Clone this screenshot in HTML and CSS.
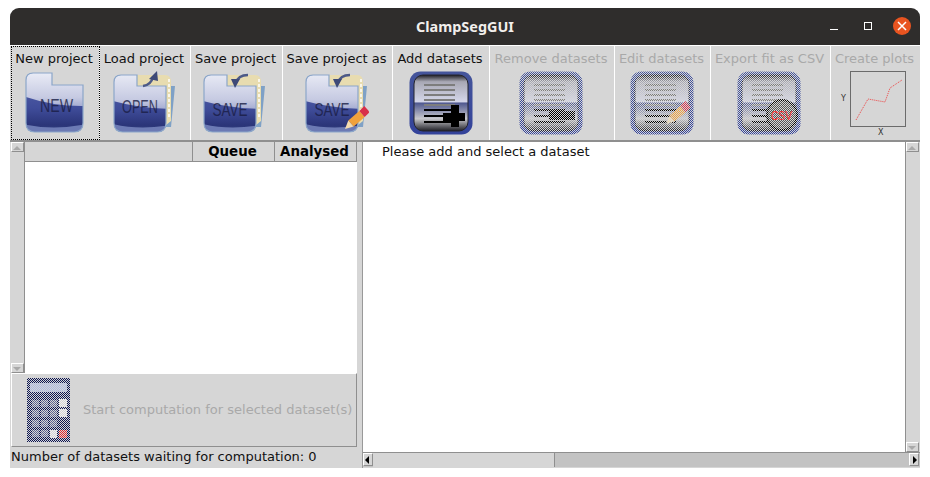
FILE: index.html
```html
<!DOCTYPE html>
<html lang="en">
<head>
    <meta charset="UTF-8">
    <meta name="viewport" content="width=device-width, initial-scale=1.0">
    <title>ClampSegGUI</title>
    <link rel="stylesheet" href="styles.css">
</head>
<body>

<div class="window">

    <!-- Title bar -->
    <div class="titlebar">
        <span class="title">ClampSegGUI</span>
        <div class="win-controls">
            <span class="win-min"></span>
            <span class="win-max"></span>
            <span class="win-close">
                <svg width="10" height="10" viewBox="0 0 10 10"><path d="M1 1L9 9M9 1L1 9" stroke="#fff" stroke-width="1.5"/></svg>
            </span>
        </div>
    </div>

    <!-- Toolbar -->
    <div class="toolbar">
        <button class="tool tool-new focused">
            <span class="tool-label">New project</span>
            <svg class="icon" width="64" height="64" viewBox="0 0 64 64">
                <defs>
                    <linearGradient id="folderDark" x1="0" y1="0" x2="0" y2="1">
                        <stop offset="0" stop-color="#5a68ae"/>
                        <stop offset="0.6" stop-color="#3f4c99"/>
                        <stop offset="0.88" stop-color="#2b3579"/>
                        <stop offset="1" stop-color="#33407f"/>
                    </linearGradient>
                    <linearGradient id="folderLight" x1="0" y1="0" x2="0" y2="1">
                        <stop offset="0" stop-color="#eceef7"/>
                        <stop offset="0.75" stop-color="#c6cae2"/>
                        <stop offset="1" stop-color="#a6add2"/>
                    </linearGradient>
                    <linearGradient id="squareFill" x1="0" y1="0" x2="0" y2="1">
                        <stop offset="0" stop-color="#45559b"/>
                        <stop offset="1" stop-color="#33429a"/>
                    </linearGradient>
                    <linearGradient id="squareInner" x1="0" y1="0" x2="0" y2="1">
                        <stop offset="0" stop-color="#1f1f26"/>
                        <stop offset="0.12" stop-color="#a8a8b4"/>
                        <stop offset="0.48" stop-color="#d5d7ea"/>
                        <stop offset="0.5" stop-color="#4f588f"/>
                        <stop offset="0.78" stop-color="#c8c8cc"/>
                        <stop offset="1" stop-color="#1f1f26"/>
                    </linearGradient>
                    <pattern id="dither" width="2" height="2" patternUnits="userSpaceOnUse">
                        <rect x="0" y="0" width="1" height="1" fill="#d6d6d6"/>
                        <rect x="1" y="1" width="1" height="1" fill="#d6d6d6"/>
                    </pattern>
                    <path id="folderShape" d="M10 2H29V14H60V52Q60 61 51 61H12Q3 61 3 52V9Q3 2 10 2Z"/>
                    <path id="folderLowShape" d="M8 4H24V15H53V52Q53 61 44 61H10Q1 61 1 52V11Q1 4 8 4Z"/>
                    <clipPath id="folderClip"><use href="#folderShape"/></clipPath>
                    <clipPath id="folderLowClip"><use href="#folderLowShape"/></clipPath>
                    <g id="folderNew">
                        <use href="#folderShape" fill="url(#folderDark)"/>
                        <g clip-path="url(#folderClip)">
                            <path d="M0 0H64V35Q30 36 0 25Z" fill="url(#folderLight)"/>
                            <path d="M0 53Q30 60 64 53V64H0Z" fill="#6c7ab4"/>
                        </g>
                        <use href="#folderShape" fill="none" stroke="#8ba6c9" stroke-width="1.2"/>
                    </g>
                    <g id="folderLow">
                        <path d="M50 15H62L58 56H50Z" fill="#7fa1c6"/>
                        <path d="M24 4H52Q58 4 58 11V50L53 54V15H24Z" fill="#e8dcb0"/>
                        <path d="M56 8V46" stroke="#fff" stroke-width="1.5" stroke-dasharray="3 2"/>
                        <use href="#folderLowShape" fill="url(#folderDark)"/>
                        <g clip-path="url(#folderLowClip)">
                            <path d="M0 0H64V38Q28 38 0 30Z" fill="url(#folderLight)"/>
                            <path d="M0 53Q28 60 64 53V64H0Z" fill="#6c7ab4"/>
                        </g>
                        <use href="#folderLowShape" fill="none" stroke="#8ba6c9" stroke-width="1.2"/>
                    </g>
                    <g id="saveArrow">
                        <path d="M33 12Q35 4 45 4" fill="none" stroke="#4d5a88" stroke-width="2.5"/>
                        <path d="M28 8L37 8L32 17Z" fill="#3e4a78"/>
                    </g>
                    <g id="docLines" fill="#7d7d7d">
                        <rect x="15" y="13" width="31" height="2"/>
                        <rect x="15" y="18" width="31" height="2"/>
                        <rect x="15" y="23" width="31" height="2"/>
                        <rect x="15" y="28" width="31" height="2"/>
                        <rect x="15" y="33" width="31" height="2"/>
                    </g>
                    <g id="docDark" fill="#000">
                        <rect x="15" y="38" width="31" height="2"/>
                        <rect x="15" y="44" width="31" height="2"/>
                        <rect x="15" y="50" width="31" height="2"/>
                    </g>
                    <g id="square">
                        <rect x="0.5" y="0.5" width="63" height="63" rx="11" fill="url(#squareFill)"/>
                        <rect x="5" y="4" width="54" height="56" rx="9" fill="url(#squareInner)" stroke="#24242c" stroke-width="1"/>
                    </g>
                    <g id="pencil">
                        <path d="M43.3 49.5L54.3 40L59.7 46L48.7 55.5Z" fill="#f0a13c"/>
                        <path d="M54.3 40L59.3 35L64.7 41L59.7 46Z" fill="#d8304a"/>
                        <path d="M43.3 49.5L40 58L48.7 55.5Z" fill="#f5dcb0"/>
                    </g>
                </defs>
                <use href="#folderNew"/>
                <text class="folder-text" x="33.5" y="41" textLength="33" lengthAdjust="spacingAndGlyphs">NEW</text>
            </svg>
        </button>

        <button class="tool tool-load">
            <span class="tool-label">Load project</span>
            <svg class="icon" width="64" height="64" viewBox="0 0 64 64">
                <use href="#folderLow"/>
                <path d="M30 15Q38 14 40 6" fill="none" stroke="#4d5a88" stroke-width="2.5"/>
                <path d="M36 8L44 0L45 10Z" fill="#3e4a78"/>
                <text class="folder-text" x="27" y="42" textLength="36" lengthAdjust="spacingAndGlyphs">OPEN</text>
            </svg>
        </button>

        <button class="tool tool-save">
            <span class="tool-label">Save project</span>
            <svg class="icon" width="64" height="64" viewBox="0 0 64 64">
                <use href="#folderLow"/>
                <use href="#saveArrow"/>
                <text class="folder-text" x="27" y="45" textLength="35" lengthAdjust="spacingAndGlyphs">SAVE</text>
            </svg>
        </button>

        <button class="tool tool-saveas">
            <span class="tool-label">Save project as</span>
            <svg class="icon" width="64" height="64" viewBox="0 0 64 64">
                <use href="#folderLow"/>
                <use href="#saveArrow"/>
                <text class="folder-text" x="27" y="45" textLength="35" lengthAdjust="spacingAndGlyphs">SAVE</text>
                <use href="#pencil"/>
            </svg>
        </button>

        <button class="tool tool-add">
            <span class="tool-label">Add datasets</span>
            <svg class="icon" width="64" height="64" viewBox="0 0 64 64">
                <use href="#square"/>
                <use href="#docLines"/>
                <use href="#docDark"/>
                <path d="M34 42H42V34H50V42H56V50H50V56H42V50H34Z" fill="#000"/>
            </svg>
        </button>

        <button class="tool tool-remove disabled">
            <span class="tool-label">Remove datasets</span>
            <svg class="icon" width="64" height="64" viewBox="0 0 64 64">
                <use href="#square"/>
                <use href="#docLines"/>
                <use href="#docDark"/>
                <rect x="30" y="40" width="26" height="9" fill="#000"/>
                <rect width="64" height="64" fill="url(#dither)"/>
            </svg>
        </button>

        <button class="tool tool-edit disabled">
            <span class="tool-label">Edit datasets</span>
            <svg class="icon" width="64" height="64" viewBox="0 0 64 64">
                <use href="#square"/>
                <use href="#docLines"/>
                <use href="#docDark"/>
                <use href="#pencil" x="-4" y="-5"/>
                <rect width="64" height="64" fill="url(#dither)"/>
            </svg>
        </button>

        <button class="tool tool-export disabled">
            <span class="tool-label">Export fit as CSV</span>
            <svg class="icon" width="64" height="64" viewBox="0 0 64 64">
                <use href="#square"/>
                <use href="#docLines"/>
                <use href="#docDark"/>
                <circle cx="45" cy="44" r="15" fill="#555" stroke="#000" stroke-width="2"/>
                <rect width="64" height="64" fill="url(#dither)"/>
                <text class="csv-text" x="44.5" y="49" textLength="21" lengthAdjust="spacingAndGlyphs">CSV</text>
            </svg>
        </button>

        <button class="tool tool-plots disabled">
            <span class="tool-label">Create plots</span>
            <svg class="icon" width="70" height="66" viewBox="0 0 70 66">
                <rect x="10.5" y="0.5" width="55" height="55" fill="none" stroke="#000" stroke-dasharray="1 1"/>
                <path d="M16 49L28 28L45 31L50 17L62 9" fill="none" stroke="#ee4444" stroke-dasharray="1 1"/>
                <text class="axis-text" x="1" y="30">Y</text>
                <text class="axis-text" x="38" y="64">X</text>
            </svg>
        </button>
    </div>

    <!-- Main area -->
    <div class="main">
        <div class="left">
            <div class="table-wrap">
                <div class="vscroll">
                    <span class="arrow-btn arrow-up"></span>
                    <span class="vthumb"></span>
                    <span class="arrow-btn arrow-down"></span>
                </div>
                <div class="table">
                    <div class="table-head">
                        <div class="col col-name"></div>
                        <div class="col col-queue">Queue</div>
                        <div class="col col-analysed">Analysed</div>
                    </div>
                </div>
            </div>
            <button class="start-btn">
                <svg class="calc" width="43" height="64" viewBox="0 0 43 64">
                    <rect width="43" height="64" fill="#0c1450"/>
                    <rect x="3" y="5" width="37" height="9" fill="#aab6de"/>
                    <g fill="#5e6490">
                        <rect x="5" y="22" width="7" height="7"/><rect x="14" y="22" width="7" height="7"/><rect x="23" y="22" width="7" height="7"/>
                        <rect x="5" y="32" width="7" height="7"/><rect x="14" y="32" width="7" height="7"/><rect x="23" y="32" width="7" height="7"/>
                        <rect x="5" y="42" width="7" height="7"/><rect x="14" y="42" width="7" height="7"/><rect x="23" y="42" width="7" height="7"/>
                        <rect x="5" y="52" width="7" height="7"/><rect x="14" y="52" width="7" height="7"/>
                    </g>
                    <rect x="32" y="21" width="8" height="8" fill="#eee"/>
                    <rect x="32" y="31" width="8" height="8" fill="#eee"/>
                    <rect x="23" y="52" width="7" height="8" fill="#eee"/>
                    <rect x="32" y="52" width="8" height="8" fill="#e8262a"/>
                    <rect width="43" height="64" fill="url(#dither)"/>
                </svg>
                <span class="start-label">Start computation for selected dataset(s)</span>
            </button>
            <div class="status">Number of datasets waiting for computation: 0</div>
        </div>

        <div class="right">
            <div class="right-top">
                <div class="plot-area">
                    <p class="hint">Please add and select a dataset</p>
                </div>
                <div class="vscroll vscroll-right">
                    <span class="arrow-btn arrow-up"></span>
                    <span class="vthumb"></span>
                    <span class="arrow-btn arrow-down"></span>
                </div>
            </div>
            <div class="hscroll">
                <span class="arrow-btn arrow-left"></span>
                <span class="hthumb"></span>
                <span class="htrack"></span>
                <span class="arrow-btn arrow-right"></span>
            </div>
        </div>
    </div>
</div>

</body>
</html>
```

FILE: styles.css
```css
body {
    margin: 0;
    background: #fff;
    font-family: "DejaVu Sans", sans-serif;
    padding: 8px 10px 0;
    height: 469px;
    overflow: hidden;
}

.window {
    width: 910px;
    height: 460px;
    display: flex;
    flex-direction: column;
    background: #d6d6d6;
    border-radius: 9px 9px 0 0;
    overflow: hidden;
}

/* Title bar */
.titlebar {
    height: 37px;
    background: #2f2d2c;
    border-bottom: 1px solid #fff;
    flex: none;
    position: relative;
    display: flex;
    align-items: center;
    justify-content: center;
}

.title {
    color: #f2efec;
    font-family: "Noto Sans", sans-serif;
    font-weight: bold;
    font-size: 14.4px;
}

.win-controls {
    position: absolute;
    right: 9px;
    top: 9px;
    display: flex;
    align-items: center;
}

.win-min {
    width: 8px;
    height: 1px;
    background: #fff;
    margin-top: 6px;
    margin-right: 26px;
}

.win-max {
    width: 6px;
    height: 6px;
    border: 1px solid #fff;
    margin-right: 21px;
}

.win-close {
    width: 18px;
    height: 18px;
    border-radius: 50%;
    background: #e95420;
    display: flex;
    align-items: center;
    justify-content: center;
}

/* Toolbar */
.toolbar {
    display: flex;
    height: 96px;
    flex: none;
    border-bottom: 2px solid #8f8f8f;
    box-sizing: border-box;
    padding-left: 1px;
}

.tool {
    display: flex;
    flex-direction: column;
    align-items: center;
    margin: 0;
    padding: 4px 2px 0 0;
    border: none;
    border-right: 1px solid #fff;
    background: #d6d6d6;
    font-family: inherit;
    font-size: 13px;
    color: #111;
    height: 94px;
    box-sizing: border-box;
    flex: none;
}

.tool-label {
    line-height: 17px;
    white-space: nowrap;
}

.icon {
    margin-top: 4px;
    flex: none;
    align-self: flex-start;
}

.focused {
    outline: 1px dotted #000;
    outline-offset: -1px;
}

.disabled {
    color: #a9a9a9;
}

.tool-new { width: 89px; }
.tool-new .icon { margin-left: 12px; }
.tool-load { width: 91px; }
.tool-load .icon { margin-left: 13px; }
.tool-save { width: 92px; }
.tool-save .icon { margin-left: 12px; }
.tool-saveas { width: 110px; }
.tool-saveas .icon { margin-left: 22px; }
.tool-add { width: 97px; }
.tool-add .icon { margin-left: 16px; }
.tool-remove { width: 125px; }
.tool-remove .icon { margin-left: 29px; }
.tool-edit { width: 96px; }
.tool-edit .icon { margin-left: 15px; }
.tool-export { width: 120px; }
.tool-export .icon { margin-left: 26px; }
.tool-plots { width: 89px; border-right: none; }
.tool-plots .icon { margin-left: 9px; }

.folder-text {
    font-family: "Liberation Sans", sans-serif;
    font-size: 19px;
    fill: #1a1d44;
    opacity: 0.8;
    text-anchor: middle;
}

.csv-text {
    font-family: "Liberation Sans", sans-serif;
    font-size: 13px;
    fill: #f33;
    text-anchor: middle;
}

.axis-text {
    font-family: "DejaVu Sans", sans-serif;
    font-size: 8px;
    fill: #333;
}

/* Main area */
.main {
    flex: 1;
    display: flex;
    min-height: 0;
}

.left {
    width: 346px;
    margin-left: 1px;
    display: flex;
    flex-direction: column;
    flex: none;
}

.table-wrap {
    height: 231px;
    display: flex;
    flex: none;
}

.table {
    flex: 1;
    background: #fff;
}

.table-head {
    display: flex;
    height: 20px;
    background: #d6d6d6;
    border-bottom: 1px solid #8f8f8f;
    box-sizing: border-box;
}

.col {
    font-weight: bold;
    font-size: 13.4px;
    line-height: 19px;
    text-align: center;
    color: #000;
    border-right: 1px solid #8f8f8f;
    box-sizing: border-box;
    padding-right: 2px;
}

.col-name { width: 168px; }
.col-queue { width: 82px; }
.col-analysed { width: 82px; }

/* Scroll bars */
.vscroll {
    width: 13px;
    flex: none;
    display: flex;
    flex-direction: column;
    background: #c3c3c3;
    border-right: 1px solid #8f8f8f;
}

.vscroll-right {
    border-left: 1px solid #8f8f8f;
    border-right: none;
}

.vthumb {
    flex: 1;
    background: #d6d6d6;
}

.arrow-btn {
    flex: none;
    background: #d6d6d6;
    border: 1px solid #8f8f8f;
    border-left-color: #fff;
    border-top-color: #fff;
    position: relative;
    width: 11px;
    height: 8px;
}

.arrow-left, .arrow-right {
    width: 8px;
    height: 11px;
}

.arrow-btn::after {
    content: "";
    position: absolute;
    border: 4px solid transparent;
}

.arrow-up::after {
    left: 1px;
    top: -1px;
    border-bottom-color: #a9a9a9;
}

.arrow-down::after {
    left: 1px;
    top: 3px;
    border-top-color: #a9a9a9;
}

.arrow-left::after {
    left: -3px;
    top: 2px;
    border-right-color: #000;
}

.arrow-right::after {
    left: 3px;
    top: 2px;
    border-left-color: #000;
}

/* Start button */
.start-btn {
    height: 74px;
    margin: 0;
    padding: 0 0 0 15px;
    flex: none;
    display: flex;
    align-items: center;
    gap: 13px;
    background: #d6d6d6;
    border: 1px solid #8f8f8f;
    border-left-color: #fff;
    border-top-color: #fff;
    font-family: inherit;
    font-size: 13px;
    color: #a9a9a9;
}

.calc {
    flex: none;
}

.start-label {
    white-space: nowrap;
    margin-bottom: 2px;
}

.status {
    font-size: 13px;
    line-height: 20px;
    color: #111;
    white-space: nowrap;
}

/* Right side */
.right {
    margin-left: 5px;
    flex: 1;
    display: flex;
    flex-direction: column;
    min-width: 0;
    border-left: 1px solid #999;
}

.right-top {
    flex: 1;
    display: flex;
    min-height: 0;
    padding-right: 1px;
}

.plot-area {
    flex: 1;
    background: #fff;
}

.hint {
    margin: 1px 0 0 19px;
    font-size: 13px;
    line-height: 17px;
    color: #111;
}

.hscroll {
    height: 14px;
    flex: none;
    display: flex;
    background: #c3c3c3;
    border-top: 1px solid #8f8f8f;
    margin-bottom: 1px;
    padding-right: 1px;
}

.hthumb {
    width: 181px;
    background: #d6d6d6;
    border-right: 1px solid #8f8f8f;
}

.htrack {
    flex: 1;
}
```
